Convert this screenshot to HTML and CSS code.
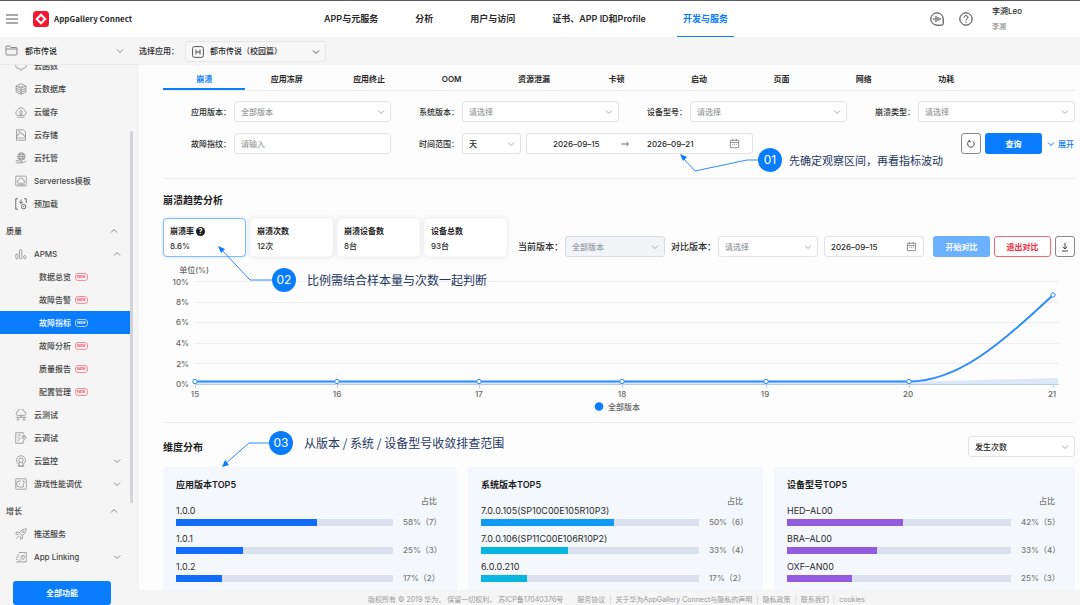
FILE: index.html
```html
<!DOCTYPE html>
<html lang="zh-CN">
<head>
<meta charset="utf-8">
<meta name="viewport" content="width=device-width, initial-scale=1">
<title>AppGallery Connect</title>
<link rel="stylesheet" href="styles.css">
</head>
<body>
<svg class="defs" aria-hidden="true">
  <symbol id="down" viewBox="0 0 8 8"><path d="M1 2.500 4 5.500 7 2.500"/></symbol>
  <symbol id="up" viewBox="0 0 8 8"><path d="M1 5.500 4 2.500 7 5.500"/></symbol>
  <symbol id="calendar" viewBox="0 0 12 12"><path d="M1.500 2.500h9v8h-9zM1.500 5h9M4 1v2.500M8 1v2.500M3.500 7h1M5.500 7h1M7.500 7h1"/></symbol>
</svg>

<header class="header">
  <div class="brand">
    <button class="icon-button" aria-label="菜单"><svg class="menu-icon" viewBox="0 0 12 10"><path d="M0 1h12M0 5h12M0 9h12"/></svg></button>
    <svg class="logo" viewBox="0 0 16 16"><rect width="16" height="16" rx="3.500" fill="#f5152f"/><path d="M8 2.300 13.700 8 8 13.700 2.300 8z" fill="#fff"/><path d="M8 5.200 10.800 8 8 10.800 5.200 8z" fill="#f5152f"/></svg>
    <span class="brand-name">AppGallery Connect</span>
  </div>
  <nav class="top-nav">
    <a href="#">APP与元服务</a>
    <a href="#">分析</a>
    <a href="#">用户与访问</a>
    <a href="#">证书、APP ID和Profile</a>
    <a href="#" class="active">开发与服务</a>
  </nav>
  <div class="account">
    <button class="icon-button" aria-label="语音助手"><svg class="round-icon" viewBox="0 0 14 14"><path d="M7 .8a6.200 6.200 0 1 0 0 12.400h4.700q1.500 0 1.500-1.500V7A6.200 6.200 0 0 0 7 .8zM4 6v2M6 4v6M8 5v4M10 6v2"/></svg></button>
    <button class="icon-button" aria-label="帮助"><svg class="round-icon" viewBox="0 0 14 14"><circle cx="7" cy="7" r="6.200"/><path d="M5.200 5.500C5.200 3 8.900 3.100 8.900 5.400 8.900 6.700 7 6.700 7 8.300M7 9.600v1.100"/></svg></button>
    <div class="user"><span>李溯Leo</span><small>李溯</small></div>
  </div>
</header>

<div class="context-bar">
  <button class="project"><svg class="folder" viewBox="0 0 13 11"><path d="M1 9V1.800q0-.8.8-.8h3l1.200 1.500h5q1 0 1 1V9q0 1-1 1H2Q1 10 1 9zM1 4h11"/></svg><span>都市传说</span><svg class="chevron"><use href="#down"/></svg></button>
  <label for="app">选择应用：</label>
  <div class="select app-select">
    <select id="app"><option>都市传说（校园篇）</option></select>
    <svg class="app-icon" viewBox="0 0 12 12"><rect x=".6" y=".6" width="10.800" height="10.800" rx="2"/><path d="M4 3.500v5M8 3.500v5M4 6h4"/></svg>
    <svg class="chevron"><use href="#down"/></svg>
  </div>
</div>

<div class="body">
  <aside class="sidebar">
    <nav class="menu">
      <a href="#"><svg class="ico" viewBox="0 0 16 16"><path d="M4 11a3 3 0 0 1 0-6 4 4 0 0 1 8 0 3 3 0 0 1 0 6h-2l-2 3-2-3z"/></svg>云函数</a>
      <a href="#"><svg class="ico" viewBox="0 0 16 16"><path d="M8 1 14.500 4 8 7 1.500 4zM1.500 4v8L8 15l6.500-3V4M1.500 6.700l6.500 3 6.500-3M1.500 9.400l6.500 3 6.500-3M5 4l3 1.500L11 4M8 7v8"/></svg>云数据库</a>
      <a href="#"><svg class="ico" viewBox="0 0 16 16"><path d="M4 12.500a3.300 3.300 0 0 1-1-6.300 5.200 5.200 0 0 1 10 0 3.300 3.300 0 0 1-1 6.300zM3.500 15h9"/><circle cx="8" cy="8" r="2"/><path d="M6 12.500Q8 9.500 10 12.500"/></svg>云缓存</a>
      <a href="#"><svg class="ico" viewBox="0 0 16 16"><path d="M2 1h9l3 3v11H2zM4 3.500h3M4 12a2 2 0 0 1 .5-4 3 3 0 0 1 6 0 2 2 0 0 1 1 4z"/></svg>云存储</a>
      <a href="#"><svg class="ico" viewBox="0 0 16 16"><circle cx="8.500" cy="6" r="5"/><ellipse cx="8.500" cy="6" rx="2.300" ry="5"/><path d="M3.500 6h10M4.500 3.500h8M4.500 8.500h8M1 11.500h3l3 1.500h3M1 14.500h9l5-2.500"/></svg>云托管</a>
      <a href="#"><svg class="ico" viewBox="0 0 16 16"><rect x="1" y="1.500" width="14" height="13" rx="1"/><path d="M5 11a2 2 0 0 1 0-4 3 3 0 0 1 6 0 2 2 0 0 1 0 4zM3 13h10"/></svg>Serverless模板</a>
      <a href="#"><svg class="ico dark" viewBox="0 0 16 16"><path d="M4 1H1v14h3M12 1h3v6M8 2v5M5.500 5 8 7.300 10.500 5"/><circle cx="11.500" cy="11.500" r="3"/><path d="M10.500 11.500h2"/></svg>预加载</a>
      <button class="group">质量<svg class="chevron"><use href="#up"/></svg></button>
      <button class="parent"><svg class="ico" viewBox="0 0 16 16"><rect x="1" y="8" width="3" height="6.500" rx="1.500"/><rect x="6" y="2" width="3" height="12.500" rx="1.500"/><rect x="11.500" y="10" width="3" height="4.500" rx="1.500"/></svg>APMS<svg class="chevron"><use href="#up"/></svg></button>
      <a href="#" class="sub">数据总览<span class="tag">New</span></a>
      <a href="#" class="sub">故障告警<span class="tag">New</span></a>
      <a href="#" class="sub current">故障指标<span class="tag">New</span></a>
      <a href="#" class="sub">故障分析<span class="tag">New</span></a>
      <a href="#" class="sub">质量报告<span class="tag">New</span></a>
      <a href="#" class="sub">配置管理<span class="tag">New</span></a>
      <a href="#"><svg class="ico" viewBox="0 0 16 16"><path d="M4 8.500a2.500 2.500 0 0 1 0-5 4 4 0 0 1 8 0 2.500 2.500 0 0 1 0 5zM1 11h14M4 11v3M12 11v3M2 14.500h4M10 14.500h4M8 8.500v4"/></svg>云测试</a>
      <a href="#"><svg class="ico" viewBox="0 0 16 16"><path d="M11 11v4H1V1h10v2M3.500 4h4M3.500 7h2M4 12l3-4"/><path d="m8.500 7 3.500-3 3.500 3-3 3.500z"/><circle cx="12" cy="7" r="1"/></svg>云调试</a>
      <button class="parent"><svg class="ico" viewBox="0 0 16 16"><path d="M5.500 12.500A6 6 0 1 1 10.500 12.500"/><circle cx="8" cy="7" r="3"/><path d="M6 9.500 5 14.500h6l-1-5M3.500 15h9"/></svg>云监控<svg class="chevron"><use href="#down"/></svg></button>
      <button class="parent"><svg class="ico" viewBox="0 0 16 16"><rect x="1" y="1" width="14" height="14" rx="1"/><path d="M8 4H6a4 4 0 0 0 0 8h5V9M10 4h2v3M6 7v2M10 8h2"/></svg>游戏性能调优<svg class="chevron"><use href="#down"/></svg></button>
      <button class="group">增长<svg class="chevron"><use href="#up"/></svg></button>
      <a href="#"><svg class="ico" viewBox="0 0 16 16"><path d="M15 1Q9 1 6 6L9.500 10Q15 7 15 1zM6 6 2 5.500 1 8l4 1M9.500 10l.5 4-2.500 1L7 11M5 10.500 1.500 14.500"/><circle cx="11" cy="5" r="1.200"/></svg>推送服务</a>
      <button class="parent"><svg class="ico" viewBox="0 0 16 16"><path d="M5 2h10v12.500H1M3 5h3M1.500 8H5M1 11h3M8 10.500 12.500 5M7 9l2-3h2M9 12l3-2 1-3M5 14l2-3"/></svg>App Linking<svg class="chevron"><use href="#down"/></svg></button>
    </nav>
    <button class="all-features">全部功能</button>
    <span class="scroll-thumb"></span>
  </aside>

  <div class="page">
    <main class="content">
      <nav class="tabs">
        <a href="#" class="active">崩溃</a><a href="#">应用冻屏</a><a href="#">应用终止</a><a href="#">OOM</a><a href="#">资源泄漏</a><a href="#">卡顿</a><a href="#">启动</a><a href="#">页面</a><a href="#">网络</a><a href="#">功耗</a>
      </nav>

      <form class="filters">
        <div class="field"><label for="f1">应用版本：</label><div class="select"><select id="f1" class="muted"><option>全部版本</option></select><svg class="chevron"><use href="#down"/></svg></div></div>
        <div class="field"><label for="f2">系统版本：</label><div class="select"><select id="f2" class="muted"><option>请选择</option></select><svg class="chevron"><use href="#down"/></svg></div></div>
        <div class="field"><label for="f3">设备型号：</label><div class="select"><select id="f3" class="muted"><option>请选择</option></select><svg class="chevron"><use href="#down"/></svg></div></div>
        <div class="field"><label for="f4">崩溃类型：</label><div class="select"><select id="f4" class="muted"><option>请选择</option></select><svg class="chevron"><use href="#down"/></svg></div></div>
        <div class="field"><label for="f5">故障指纹：</label><input id="f5" class="box" type="text" placeholder="请输入"></div>
        <div class="field period"><label for="f6">时间范围：</label>
          <div class="select unit"><select id="f6"><option>天</option></select><svg class="chevron"><use href="#down"/></svg></div>
          <div class="box range"><input type="text" value="2026–09–15" aria-label="开始日期"><svg class="arrow" viewBox="0 0 8 6"><path d="M0 3h7.500M5.500 1l2 2-2 2"/></svg><input type="text" value="2026–09–21" aria-label="结束日期"><svg class="cal"><use href="#calendar"/></svg></div>
        </div>
        <div class="actions">
          <button type="button" class="square" aria-label="重置"><svg viewBox="0 0 10 10"><path d="M3 2.200A3.300 3.300 0 1 0 6.700 2.100M3.300.7 3 2.400l1.800.4"/></svg></button>
          <button type="button" class="primary query">查询</button>
          <button type="button" class="expand"><svg class="chevron"><use href="#down"/></svg>展开</button>
        </div>
      </form>

      <section class="trend">
        <h2>崩溃趋势分析</h2>
        <div class="trend-bar">
          <div class="metrics">
            <button class="metric selected"><b>崩溃率 <i class="hint">?</i></b><span>8.6%</span></button>
            <button class="metric"><b>崩溃次数</b><span>12次</span></button>
            <button class="metric"><b>崩溃设备数</b><span>8台</span></button>
            <button class="metric"><b>设备总数</b><span>93台</span></button>
          </div>
          <div class="compare">
            <label for="c1">当前版本：</label>
            <div class="select"><select id="c1" class="muted" disabled><option>全部版本</option></select><svg class="chevron"><use href="#down"/></svg></div>
            <label for="c2">对比版本：</label>
            <div class="select"><select id="c2" class="muted"><option>请选择</option></select><svg class="chevron"><use href="#down"/></svg></div>
            <div class="box date"><input type="text" value="2026–09–15" aria-label="对比日期"><svg class="cal"><use href="#calendar"/></svg></div>
            <div class="compare-actions">
              <button class="primary soft">开始对比</button>
              <button class="danger">退出对比</button>
              <button class="square" aria-label="下载"><svg viewBox="0 0 10 10"><path d="M5 1v6M2.700 4.800 5 7l2.300-2.200M2 9h6"/></svg></button>
            </div>
          </div>
        </div>
        <svg class="chart" viewBox="0 0 912 155" role="img" aria-label="崩溃率趋势">
          <g class="grid-lines"><path d="M32 21.500H896M32 42.500H896M32 62.500H896M32 83.500H896M32 103.500H896"/></g>
          <path d="M32 122h714l149-4v6H32z" fill="#dde7fa"/>
          <path d="M32 124.500H896M32.500 124v4M174.500 124v4M316.500 124v4M459.500 124v4M603.500 124v4M746.500 124v4M890.500 124v4" stroke="#bccbe6" fill="none"/>
          <path d="M32 121.500H746C794 121.500 837 85 890 35" class="line"/>
          <g class="dots"><circle cx="32" cy="121.500" r="2.200"/><circle cx="174" cy="121.500" r="2.200"/><circle cx="316" cy="121.500" r="2.200"/><circle cx="459" cy="121.500" r="2.200"/><circle cx="603" cy="121.500" r="2.200"/><circle cx="746" cy="121.500" r="2.200"/><circle cx="890" cy="35" r="2.200"/></g>
          <g class="y-labels"><text x="46" y="13">单位(%)</text><text x="26" y="25">10%</text><text x="26" y="45">8%</text><text x="26" y="65">6%</text><text x="26" y="86">4%</text><text x="26" y="107">2%</text><text x="26" y="127">0%</text></g>
          <g class="x-labels"><text x="32" y="137">15</text><text x="174" y="137">16</text><text x="316" y="137">17</text><text x="459" y="137">18</text><text x="602" y="137">19</text><text x="745" y="137">20</text><text x="889" y="137">21</text></g>
          <circle cx="436" cy="146.500" r="4.300" fill="#0a7dff"/><text x="445" y="150" class="legend">全部版本</text>
        </svg>
      </section>

      <section class="dimension">
        <div class="dimension-head"><h2>维度分布</h2><div class="select order"><select aria-label="排序"><option>发生次数</option></select><svg class="chevron"><use href="#down"/></svg></div></div>
        <div class="panels">
          <article class="panel">
            <h3>应用版本TOP5</h3><p class="ratio">占比</p>
            <ul>
              <li><span class="name">1.0.0</span><span class="bar"><i class="blue" style="width:65%"></i></span><span class="pct">58%（7）</span></li>
              <li><span class="name">1.0.1</span><span class="bar"><i class="blue" style="width:31%"></i></span><span class="pct">25%（3）</span></li>
              <li><span class="name">1.0.2</span><span class="bar"><i class="blue" style="width:21%"></i></span><span class="pct">17%（2）</span></li>
            </ul>
          </article>
          <article class="panel">
            <h3>系统版本TOP5</h3><p class="ratio">占比</p>
            <ul>
              <li><span class="name">7.0.0.105(SP10C00E105R10P3)</span><span class="bar"><i class="sky" style="width:61%"></i></span><span class="pct">50%（6）</span></li>
              <li><span class="name">7.0.0.106(SP11C00E106R10P2)</span><span class="bar"><i class="cyan" style="width:40%"></i></span><span class="pct">33%（4）</span></li>
              <li><span class="name">6.0.0.210</span><span class="bar"><i class="cyan" style="width:21%"></i></span><span class="pct">17%（2）</span></li>
            </ul>
          </article>
          <article class="panel">
            <h3>设备型号TOP5</h3><p class="ratio">占比</p>
            <ul>
              <li><span class="name">HED–AL00</span><span class="bar"><i class="violet" style="width:52%"></i></span><span class="pct">42%（5）</span></li>
              <li><span class="name">BRA–AL00</span><span class="bar"><i class="violet" style="width:40%"></i></span><span class="pct">33%（4）</span></li>
              <li><span class="name">OXF–AN00</span><span class="bar"><i class="violet" style="width:29%"></i></span><span class="pct">25%（3）</span></li>
            </ul>
          </article>
        </div>
      </section>

      <div class="callout one"><svg width="78" height="24" viewBox="0 0 78 24"><path d="M3 4 15 17 67 6h11"/><path class="tip" d="M0 0 7 3 3 7z"/></svg><b>01</b><span>先确定观察区间，再看指标波动</span></div>
      <div class="callout two"><svg width="54" height="46" viewBox="0 0 54 46"><path d="M3 3 32 34h22"/><path class="tip" d="M0 0 7 3 3 7z"/></svg><b>02</b><span>比例需结合样本量与次数一起判断</span></div>
      <div class="callout three"><svg width="47" height="37" viewBox="0 0 47 37"><path d="M3 33 27 12h20"/><path class="tip" d="M0 36 3 29 7 34z"/></svg><b>03</b><span>从版本 / 系统 / 设备型号收敛排查范围</span></div>
    </main>
    <footer class="footer">
      <span>版权所有 © 2019 华为。 保留一切权利。 苏ICP备17040376号</span>
      <nav><a href="#">服务协议</a><a href="#">关于华为AppGallery Connect与隐私的声明</a><a href="#">隐私政策</a><a href="#">联系我们</a><a href="#">cookies</a></nav>
    </footer>
  </div>
</div>
</body>
</html>
```

FILE: styles.css
```css
* { box-sizing: border-box; }
body {
  margin: 0;
  height: 100vh;
  display: flex;
  flex-direction: column;
  overflow: hidden;
  background: #f5f5f5;
  color: #2b2b2b;
  font: 500 8px/12px Inter, "Noto Sans CJK SC", sans-serif;
}
button, input, select { font: inherit; color: inherit; margin: 0; }
button { border: 0; padding: 0; background: none; }
a { color: inherit; text-decoration: none; }
h2, h3, p, ul { margin: 0; padding: 0; list-style: none; }
svg { fill: none; flex: none; }
.defs { position: absolute; width: 0; height: 0; }

/* header */
.header {
  flex: none;
  display: flex;
  height: 37px;
  border-top: 1px solid #5c5c60;
  background: #fff;
}
.brand { display: flex; align-items: center; width: 318px; padding-left: 6px; }
.icon-button { display: flex; }
.menu-icon { width: 12px; height: 10px; stroke: #555; }
.logo { width: 16px; height: 16px; margin: 0 5px 0 15px; }
.brand-name { font: 700 8px/12px "Noto Sans CJK SC", sans-serif; }
.top-nav { display: flex; gap: 25px; font-size: 9px; font-weight: 600; white-space: nowrap; }
.top-nav a { display: flex; align-items: center; padding: 1px 6px 0; border-bottom: 1px solid transparent; }
.top-nav .active { color: #0a7dff; border-color: #0a7dff; }
.account { display: flex; align-items: center; gap: 15px; margin-left: auto; padding-right: 58px; }
.round-icon { width: 14px; height: 14px; stroke: #333; }
.user { display: flex; flex-direction: column; gap: 4px; margin-left: 4px; }
.user small { font-size: 7px; color: #888; }

/* context bar */
.context-bar { flex: none; display: flex; align-items: center; height: 28px; }
.project {
  display: flex;
  align-items: center;
  gap: 7px;
  width: 139px;
  height: 28px;
  padding: 0 15px 0 5px;
  border-bottom: 1px solid #ebebeb;
}
.folder { width: 13px; height: 11px; stroke: #888; }
.chevron { width: 8px; height: 8px; stroke: #888; margin-left: auto; }
.app-icon { position: absolute; left: 7px; top: 5px; width: 12px; height: 12px; stroke: #555; pointer-events: none; }

/* form pieces */
.select { position: relative; flex: 1; min-width: 0; }
.select select, .box {
  width: 100%;
  height: 21px;
  padding: 0 6px;
  border: 1px solid #e1e3e9;
  border-radius: 3px;
  background: #fff;
}
.select select { display: block; appearance: none; opacity: 1; }
.select .chevron { position: absolute; right: 6px; top: 7px; stroke: #aaa; pointer-events: none; }
.select.app-select { flex: none; width: 141px; margin-left: 6px; }
.app-select #app { padding-left: 24px; background: #f7f7f7; border-color: #e6e6e6; }
.app-select .chevron { stroke: #555; }
.muted, ::placeholder { color: #9a9ca3; opacity: 1; }
.select select:disabled { background: #f2f4f8; border-color: #d9dde5; color: #9a9ca3; }
.cal { width: 11px; height: 11px; stroke: #888; }
.square {
  display: grid;
  place-items: center;
  width: 20px;
  height: 21px;
  border: 1px solid #888;
  border-radius: 3px;
}
.square svg { width: 10px; height: 10px; stroke: #444; }
.primary { height: 21px; border-radius: 3px; background: #0a7dff; color: #fff; font-weight: 600; }
.query { width: 57px; }

/* shell */
.body { flex: 1; min-height: 0; display: flex; }
.sidebar { position: relative; flex: none; width: 139px; overflow: hidden; }
.menu { display: flex; flex-direction: column; width: 130px; margin-top: -11px; }
.menu a, .menu button { display: flex; align-items: center; height: 23px; padding: 0 9px 0 15px; color: #444; }
.menu .ico { width: 12px; height: 12px; margin-right: 7px; stroke: #888; }
.menu .dark { stroke: #444; }
.menu .group { margin-top: 4px; padding: 0 12px 0 6px; }
.menu .sub { padding-left: 39px; }
.menu .current { background: #0a7dff; color: #fff; }
.tag {
  margin-left: 4px;
  padding: 0 1px;
  border: 1px solid #ff8b98;
  border-radius: 3px;
  color: #f5455a;
  font: 600 4px/6px Inter, sans-serif;
}
.current .tag { border-color: #a6d0ff; color: #fff; }
.all-features {
  position: absolute;
  left: 13px;
  bottom: 0;
  width: 98px;
  height: 24px;
  border-radius: 3px;
  background: #0a7dff;
  color: #fff;
  font-weight: 600;
}
.scroll-thumb { position: absolute; right: 6px; top: 66px; bottom: 102px; width: 3px; border-radius: 2px; background: #d3d4d9; }
.page { flex: 1; min-width: 0; display: flex; flex-direction: column; }
.content {
  position: relative;
  flex: 1;
  min-height: 0;
  display: flex;
  flex-direction: column;
  overflow: hidden;
  padding: 0 5px 0 24px;
  background: #fdfdfd;
}

/* tabs and filters */
.tabs { display: grid; grid-template-columns: repeat(11, 1fr); padding-right: 5px; border-bottom: 1px solid #ececec; font-weight: 600; text-align: center; }
.tabs a { height: 25px; padding-top: 8px; border-bottom: 2px solid transparent; }
.tabs .active { color: #0a7dff; border-color: #0a7dff; }
.filters {
  display: grid;
  grid-template-columns: repeat(4, 1fr);
  row-gap: 11px;
  padding: 10px 0 24px;
  border-bottom: 1px solid #f0f0f0;
}
.field { display: flex; align-items: center; }
.field > label { flex: none; width: 71px; padding-right: 3px; text-align: right; }
.field > .box { flex: 1; min-width: 0; }
.period { grid-column: span 2; }
.field .unit { flex: 0 0 59px; margin-right: 5px; }
.field > .range { flex: 0 0 227px; }
.range, .date { display: flex; align-items: center; }
.range input, .date input { width: 64px; padding: 0; border: 0; background: none; }
.field > .range { justify-content: space-between; padding: 0 12px 0 26px; }
.range input { width: 50px; }
.arrow { width: 8px; height: 6px; stroke: #777; }
.range .cal { margin-left: 14px; }
.actions { display: flex; justify-content: flex-end; gap: 4px; }
.expand { display: flex; align-items: center; gap: 3px; padding: 0 1px; color: #0a7dff; }
.expand .chevron { stroke: #0a7dff; }

/* trend */
h2 { font-size: 10px; line-height: 14px; font-weight: 600; color: #1c1c1c; }
.trend { padding: 14px 0 7px; border-bottom: 1px solid #f0f0f0; }
.trend-bar { display: flex; align-items: flex-end; gap: 11px; margin-top: 11px; }
.metrics { display: flex; gap: 4px; }
.metric {
  display: flex;
  flex-direction: column;
  gap: 3px;
  width: 83px;
  height: 39px;
  padding: 6px 6px 0;
  border: 1px solid #fafafa;
  border-radius: 4px;
  background: #fff;
  box-shadow: 0 0 4px #0000001f;
  text-align: left;
}
.metric b { font-weight: 600; color: #1c1c1c; }
.metric.selected { border-color: #80bcff; box-shadow: 0 0 3px #0a7dff40; }
.hint { display: inline-block; width: 9px; border-radius: 5px; background: #1c1c1c; color: #fff; font: 700 7px/9px Inter, sans-serif; text-align: center; }
.compare { flex: 1; display: flex; align-items: center; font-size: 8px; }
.compare label { font-size: 9px; margin-right: 2px; }
.compare .select { margin-right: 6px; }
.compare .date { flex: 0 0 100px; justify-content: space-between; }
.compare-actions { display: flex; gap: 4px; margin-left: 9px; }
.soft, .danger { width: 57px; }
.soft { background: #6cb1ff; }
.danger { border: 1px solid #ff6673; border-radius: 3px; background: #fff; color: #f52a3c; font-weight: 600; }
.chart { display: block; width: 100%; margin-top: 3px; font-size: 8px; }
.chart text { fill: #666; }
.grid-lines { stroke: #eceef3; }
.line { stroke: #2b8cff; stroke-width: 2; }
.dots { fill: #fff; stroke: #2b8cff; stroke-width: 1; }
.y-labels { text-anchor: end; }
.x-labels { text-anchor: middle; }

/* dimensions */
.dimension { flex: 1; min-height: 0; display: flex; flex-direction: column; padding-top: 13px; }
.dimension-head { display: flex; align-items: center; justify-content: space-between; }
.select.order { flex: 0 0 107px; }
.panels { flex: 1; display: grid; grid-template-columns: 294fr 295fr 301fr; gap: 11px; margin-top: 10px; }
.panel { padding: 11px 20px 0 13px; border-radius: 4px 4px 0 0; background: #f4f7fc; }
.panel h3 { font-size: 9px; line-height: 14px; font-weight: 600; color: #1c1c1c; }
.ratio { margin-top: 4px; line-height: 10px; text-align: right; color: #777; }
.panel li { display: grid; grid-template-columns: 1fr 34px; column-gap: 10px; row-gap: 3px; margin-bottom: 8px; }
.name { grid-column: span 2; font-size: 9px; font-weight: 400; line-height: 10px; }
.bar { display: flex; height: 7px; border-radius: 1px; background: #dae0ee; }
.pct { line-height: 7px; color: #777; white-space: nowrap; }
.blue { background: #126cff; }
.sky { background: #0e9bf5; }
.cyan { background: #06b5e0; }
.violet { background: #925be0; }

/* callouts drawn over the page */
.callout { position: absolute; display: flex; color: #26365f; font-weight: 400; pointer-events: none; white-space: nowrap; }
.callout svg { stroke: #2b8cff; }
.callout .tip { fill: #0a7dff; stroke: none; }
.callout b { width: 24px; height: 24px; border-radius: 12px; background: #0a7dff; color: #fff; font-size: 12px; font-weight: 400; line-height: 24px; text-align: center; }
.callout span { margin-left: 7px; font-family: "Noto Sans CJK SC", sans-serif; font-size: 11px; line-height: 24px; }
.callout.one { left: 541px; top: 89px; }
.callout.one b, .callout.one span { margin-top: -6px; }
.callout.two { left: 79px; top: 181px; }
.callout.two b, .callout.two span { margin-top: 22px; }
.callout.three { left: 83px; top: 366px; }
.callout.two span, .callout.three span { margin-left: 11px; font-size: 12px; }

/* footer */
.footer { flex: none; display: flex; justify-content: center; gap: 14px; height: 15px; padding: 5px 0 0 14px; color: #999; font-size: 7px; line-height: 10px; font-weight: 400; white-space: nowrap; }
.footer nav { display: flex; }
.footer a + a::before { content: "|"; margin: 0 4px; color: #ccc; }
```
